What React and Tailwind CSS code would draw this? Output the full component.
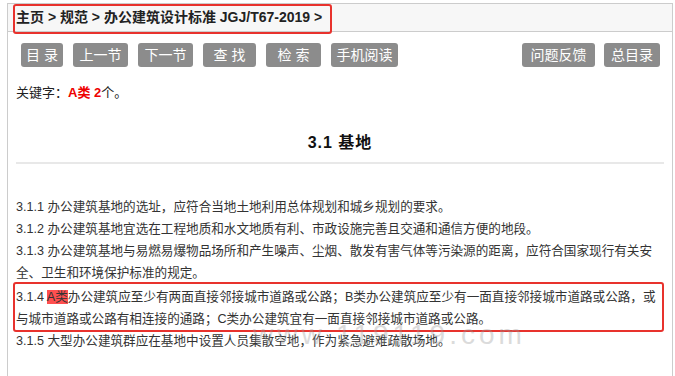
const FONT = "font-['Liberation_Sans','Noto_Sans_CJK_SC',sans-serif]";

const leftButtons = [
  { label: "目 录", w: "w-[42px]" },
  { label: "上一节", w: "w-[55px]" },
  { label: "下一节", w: "w-[55px]" },
  { label: "查 找", w: "w-[53px]" },
  { label: "检 索", w: "w-[55px]" },
  { label: "手机阅读", w: "w-[67px]" },
];

function NavButton({ label, w }) {
  return (
    <div className={`${w} h-[24px] rounded-[3px] bg-[#8c8c8c] text-white text-[14px] leading-[24px] text-center whitespace-pre`}>
      {label}
    </div>
  );
}

export default function App() {
  return (
    <div className={`w-[675px] h-[376px] bg-white overflow-hidden pt-[3px] ${FONT}`}>
      <div className="relative ml-[7px] w-[666px] h-[373px] border border-b-0 border-[#cccccc]">
        {/* breadcrumb */}
        <div className="h-[28px] bg-[#f7f7f7] border-b border-[#cccccc] flex items-center pl-[8px] text-[14px] font-bold text-[#222]">
          主页 &gt; 规范 &gt; 办公建筑设计标准 JGJ/T67-2019 &gt;
        </div>

        {/* buttons */}
        <div className="flex justify-between mt-[11px] pl-[13px] pr-[12px]">
          <div className="flex gap-[10px]">
            {leftButtons.map((b) => (
              <NavButton key={b.label} {...b} />
            ))}
          </div>
          <div className="flex gap-[9px]">
            <NavButton label="问题反馈" w="w-[73px]" />
            <NavButton label="总目录" w="w-[56px]" />
          </div>
        </div>

        {/* keyword */}
        <div className="mt-[16px] pl-[8px] text-[13px] leading-[20px] text-[#222]">
          关键字：<span className="text-[#e00] font-bold">A类 2</span>个。
        </div>

        {/* title */}
        <div className="mt-[28px] mx-[8px] pb-[7px] border-b-2 border-[#e8e8e8] text-center text-[16px] leading-[24px] font-bold tracking-[1px] text-[#111]">
          3.1 基地
        </div>

        {/* body */}
        <div className="mt-[32px] pl-[8px] text-[12.6px] leading-[22px] text-[#333] whitespace-nowrap">
          <div>3.1.1 办公建筑基地的选址，应符合当地土地利用总体规划和城乡规划的要求。</div>
          <div>3.1.2 办公建筑基地宜选在工程地质和水文地质有利、市政设施完善且交通和通信方便的地段。</div>
          <div>3.1.3 办公建筑基地与易燃易爆物品场所和产生噪声、尘烟、散发有害气体等污染源的距离，应符合国家现行有关安</div>
          <div>全、卫生和环境保护标准的规定。</div>
          <div className="relative mt-[2px]">
            <div>
              3.1.4 <span className="bg-[#ff4f4f]">A类</span>办公建筑应至少有两面直接邻接城市道路或公路；B类办公建筑应至少有一面直接邻接城市道路或公路，或
            </div>
            <div>与城市道路或公路有相连接的通路；C类办公建筑宜有一面直接邻接城市道路或公路。</div>
            <div className="absolute left-[-3px] top-[-4px] w-[651px] h-[50px] border-[2.5px] border-[#e8322d] rounded-[3px]" />
          </div>
          <div>3.1.5 大型办公建筑群应在基地中设置人员集散空地，作为紧急避难疏散场地。</div>
        </div>

        {/* breadcrumb annotation */}
        <div className="absolute left-[5px] top-[0px] w-[319px] h-[30px] border-[2.5px] border-[#e8322d] rounded-[3px]" />

        {/* watermark */}
        <div className="absolute left-[245px] top-[310px] text-[28px] tracking-[4px] text-[#9a9a9a] opacity-35 whitespace-nowrap pointer-events-none">
          www.119119.com
        </div>
      </div>
    </div>
  );
}
